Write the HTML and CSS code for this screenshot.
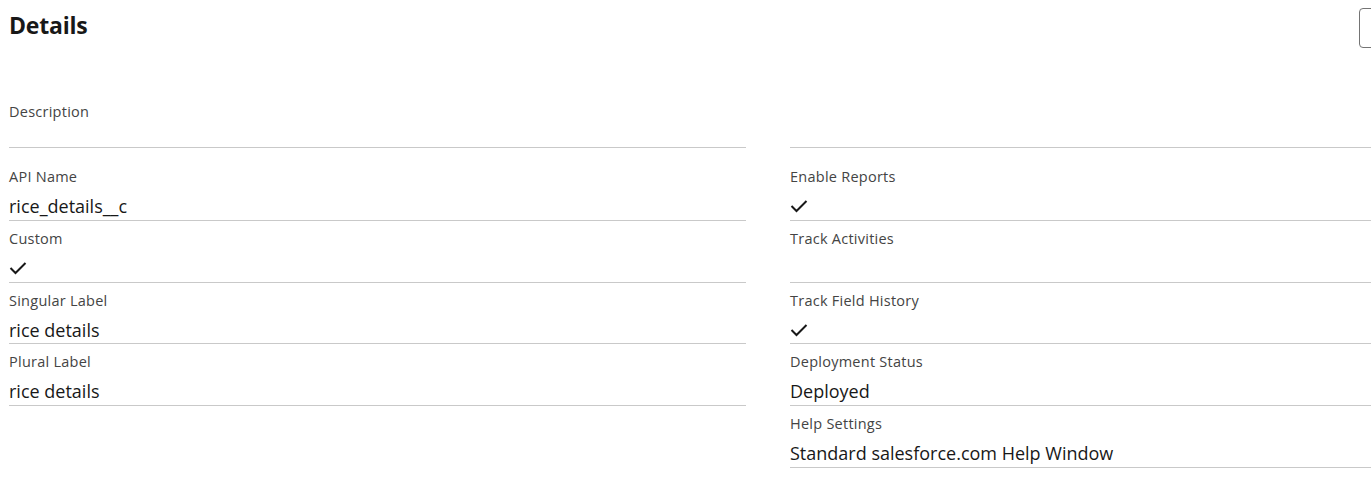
FILE: index.html
```html
<!DOCTYPE html>
<html>
<head>
<meta charset="utf-8">
<link rel="stylesheet" href="styles.css">
</head>
<body>
<div class="page">
  <div class="header">
    <h2 class="title">Details</h2>
    <button class="btn" aria-label="Edit"></button>
  </div>
  <div class="grid">
    <div class="col">
      <div class="field first"><div class="label">Description</div><div class="value"></div></div>
      <div class="field"><div class="label">API Name</div><div class="value">rice_details__c</div></div>
      <div class="field"><div class="label">Custom</div><div class="value"><svg class="check" width="18" height="14" viewBox="0 0 18 14"><path d="M1.5 7 L6.5 12 L16.5 2" fill="none" stroke="#181818" stroke-width="2"/></svg></div></div>
      <div class="field"><div class="label">Singular Label</div><div class="value">rice details</div></div>
      <div class="field"><div class="label">Plural Label</div><div class="value">rice details</div></div>
    </div>
    <div class="col">
      <div class="field first"><div class="label"></div><div class="value"></div></div>
      <div class="field"><div class="label">Enable Reports</div><div class="value"><svg class="check" width="18" height="14" viewBox="0 0 18 14"><path d="M1.5 7 L6.5 12 L16.5 2" fill="none" stroke="#181818" stroke-width="2"/></svg></div></div>
      <div class="field"><div class="label">Track Activities</div><div class="value"></div></div>
      <div class="field"><div class="label">Track Field History</div><div class="value"><svg class="check" width="18" height="14" viewBox="0 0 18 14"><path d="M1.5 7 L6.5 12 L16.5 2" fill="none" stroke="#181818" stroke-width="2"/></svg></div></div>
      <div class="field"><div class="label">Deployment Status</div><div class="value">Deployed</div></div>
      <div class="field"><div class="label">Help Settings</div><div class="value">Standard salesforce.com Help Window</div></div>
    </div>
  </div>
</div>
</body>
</html>
```
FILE: styles.css
```css
html, body {
  margin: 0;
  padding: 0;
  background: #ffffff;
  overflow: hidden;
}
body {
  font-family: "Open Sans", "Noto Sans", sans-serif;
  color: #181818;
}
.page {
  width: 1518px;
  padding: 8px 0 0 9px;
}
.header {
  display: flex;
  justify-content: space-between;
  align-items: flex-start;
  height: 86px;
}
.title {
  margin: 0;
  padding-top: 3px;
  font-size: 23px;
  line-height: 28px;
  font-weight: 700;
  letter-spacing: -0.2px;
}
.btn {
  width: 168px;
  height: 40px;
  border: 1px solid #747474;
  border-radius: 4px;
  background: #fff;
}
.grid {
  display: grid;
  grid-template-columns: 737px 737px;
  column-gap: 44px;
}
.col {
  display: flex;
  flex-direction: column;
}
.field {
  padding: 8px 0 1.75px;
  border-bottom: 1px solid #c9c9c9;
}
.field.first {
  margin-bottom: 11.25px;
}
.field.first .value {
  height: 16px;
}
.label {
  font-size: 14.5px;
  letter-spacing: 0.25px;
  line-height: 20px;
  height: 20px;
  color: #444444;
}
.value {
  margin-top: 7px;
  font-size: 18px;
  line-height: 24px;
  height: 24px;
  color: #181818;
  display: flex;
  align-items: center;
}
.check {
  display: block;
}
```
